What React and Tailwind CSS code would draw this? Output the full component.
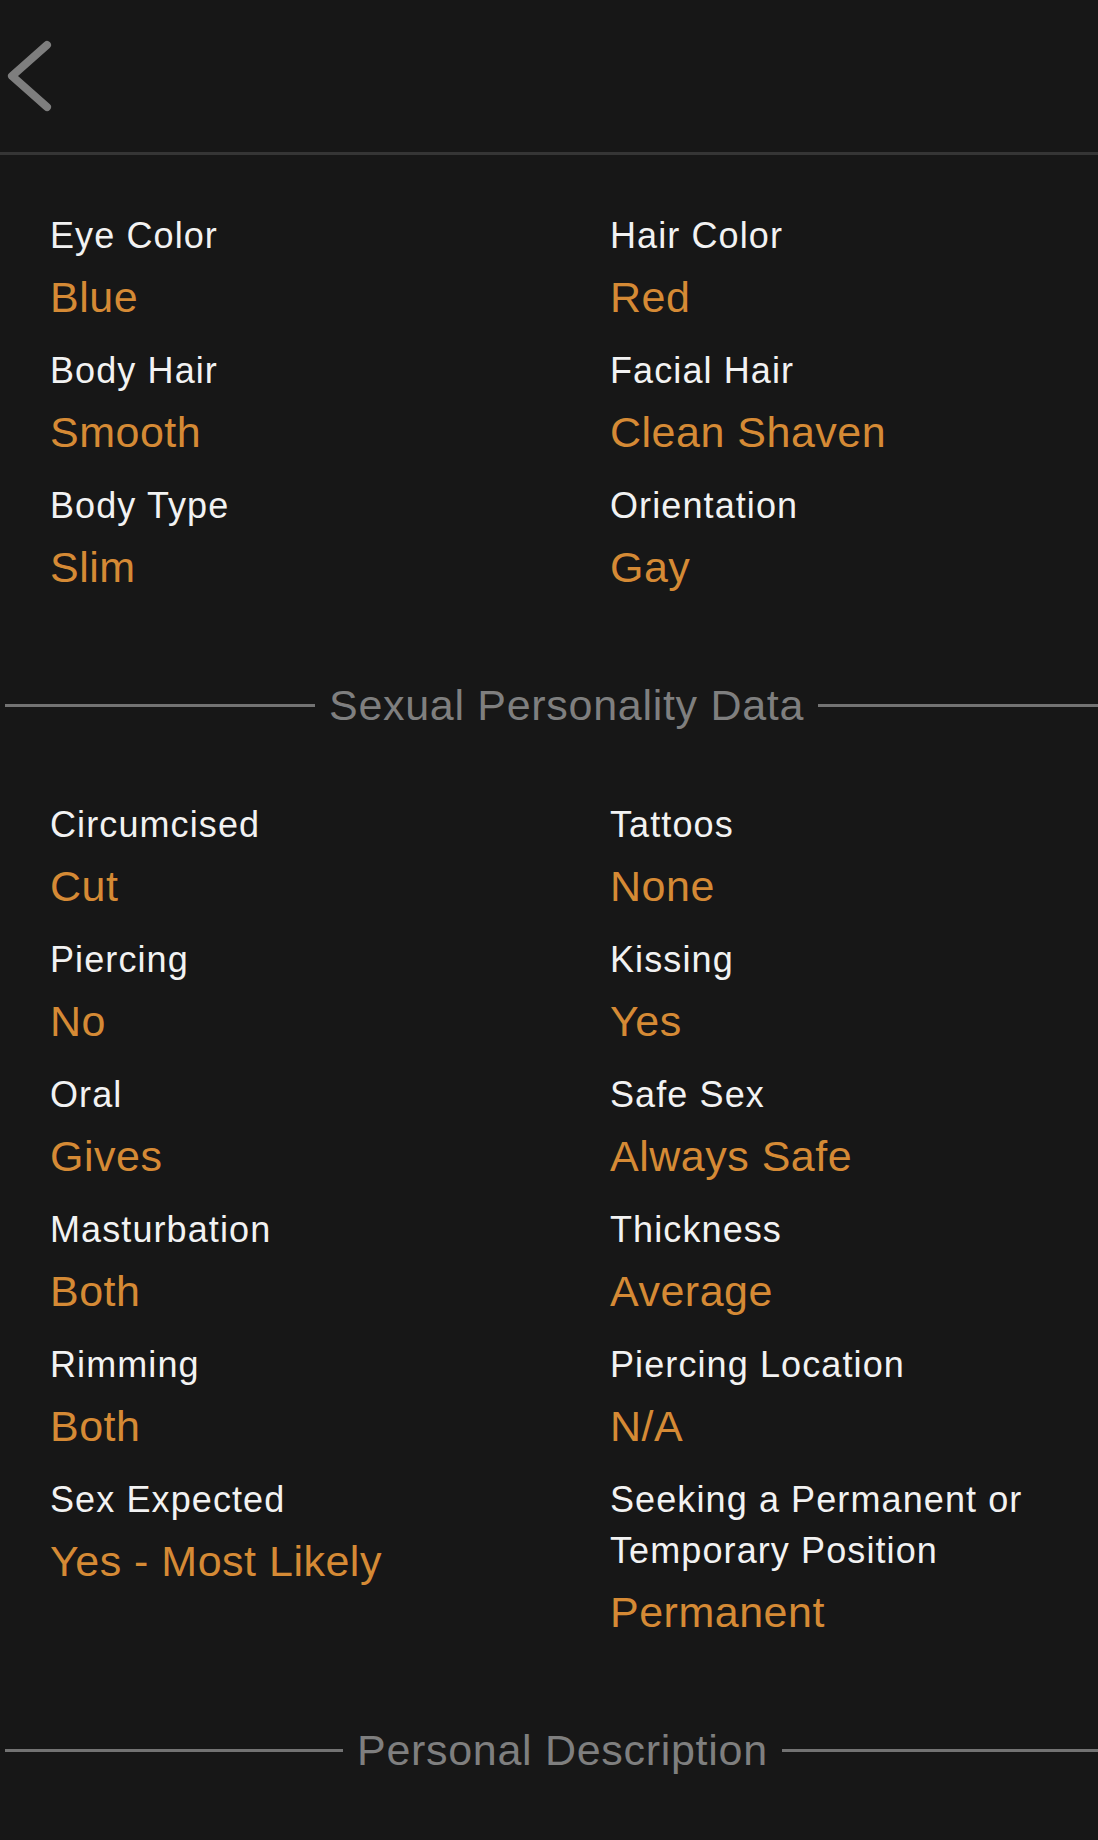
import React from "react";

const sectionOne = [
  ["Eye Color", "Blue"],
  ["Hair Color", "Red"],
  ["Body Hair", "Smooth"],
  ["Facial Hair", "Clean Shaven"],
  ["Body Type", "Slim"],
  ["Orientation", "Gay"],
];

const sectionTwo = [
  ["Circumcised", "Cut"],
  ["Tattoos", "None"],
  ["Piercing", "No"],
  ["Kissing", "Yes"],
  ["Oral", "Gives"],
  ["Safe Sex", "Always Safe"],
  ["Masturbation", "Both"],
  ["Thickness", "Average"],
  ["Rimming", "Both"],
  ["Piercing Location", "N/A"],
  ["Sex Expected", "Yes - Most Likely"],
  ["Seeking a Permanent or Temporary Position", "Permanent"],
];

const Field = ({ label, value }) => (
  <div>
    <div className="text-[36px] leading-[51px] tracking-[1.1px] text-[#f2f2f2]">
      {label}
    </div>
    <div className="mt-[6px] text-[43px] leading-[60px] tracking-[0.5px] text-[#d58a35]">
      {value}
    </div>
  </div>
);

const FieldGrid = ({ fields, className }) => (
  <div className={`grid grid-cols-[560px_1fr] gap-y-[18px] pl-[50px] ${className}`}>
    {fields.map(([label, value]) => (
      <Field key={label} label={label} value={value} />
    ))}
  </div>
);

const SectionTitle = ({ title, lineWidth }) => (
  <div className="mt-[82px] flex items-center">
    <div className={`ml-[5px] h-[3px] bg-[#737373] ${lineWidth}`} />
    <span className="mx-[14px] whitespace-nowrap text-[43px] leading-[52px] tracking-[0.7px] text-[#7f7f7f]">
      {title}
    </span>
    <div className="h-[3px] flex-1 bg-[#737373]" />
  </div>
);

export default function App() {
  return (
    <div
      className="min-h-[1840px] w-full overflow-hidden bg-[#171717]"
      style={{ fontFamily: '"Liberation Sans", Arial, sans-serif' }}
    >
      {/* Top bar */}
      <div className="flex h-[155px] items-start border-b-[3px] border-[#353535]">
        <button className="mt-[38px] ml-[4px]">
          <svg width="52" height="76" viewBox="0 0 52 76" fill="none">
            <path
              d="M43 7 L8 38 L43 69"
              stroke="#7e7e7e"
              strokeWidth="8"
              strokeLinecap="round"
              strokeLinejoin="round"
            />
          </svg>
        </button>
      </div>

      <FieldGrid fields={sectionOne} className="pt-[55px]" />

      <SectionTitle title="Sexual Personality Data" lineWidth="w-[310px]" />
      <FieldGrid fields={sectionTwo} className="mt-[68px]" />

      <SectionTitle title="Personal Description" lineWidth="w-[338px]" />
    </div>
  );
}
